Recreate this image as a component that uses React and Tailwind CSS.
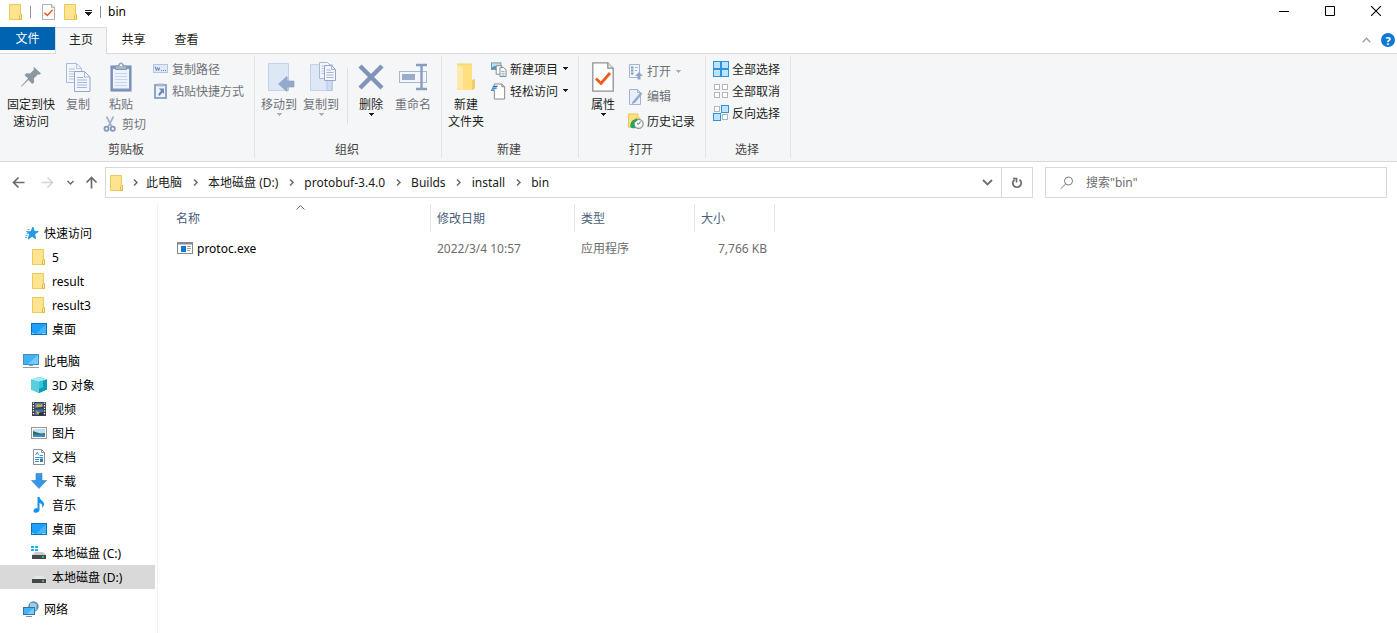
import React, { useState } from 'react';
import clsx from 'clsx';

// ---------- Icons ----------

const FolderIcon = () => (
  <svg width="16" height="16" viewBox="0 0 16 16">
    <path d="M1.5.5h11v10h1v5h-12z" fill="#ffe48f" stroke="#ecc75a" />
    <path d="M11.5 15.5v-4l1-1h1v5z" fill="#ffe9a6" stroke="#e3b93f" />
  </svg>
);

const CheckedPageIcon = ({ width = 13, height = 16 }) => (
  <svg width={width} height={height} viewBox="0 0 22 30" preserveAspectRatio="none">
    <path d="M.8.8h15l5.400 5.400v23H.8z" fill="#fff" stroke="#8d9095" strokeWidth="1.300" />
    <path d="M15.800.8v5.400h5.400" fill="#e8e9eb" stroke="#8d9095" strokeWidth="1.300" />
    <path d="M4 16.500l5 5L18 11" fill="none" stroke="#f2591b" strokeWidth="2.800" />
  </svg>
);

const ChevronIcon = ({ className }) => (
  <svg width="9" height="9" viewBox="0 0 9 9" className={className}>
    <path d="M3 1.500l3 3-3 3" fill="none" stroke="currentColor" strokeWidth="1.500" />
  </svg>
);

const Caret = ({ className }) => (
  <svg width="7" height="4" viewBox="0 0 7 4" className={className} shapeRendering="crispEdges">
    <path d="M0 0h6L3 3z" fill="currentColor" />
  </svg>
);

const PinIcon = () => (
  <svg width="22" height="22" viewBox="0 0 22 22">
    <path d="M14 1l7 6.500-1.800 1.200-1.200-.4-4.200 4.200.5 3.400-2 2-3.900-3.900L1.500 20.800 1 20.300 8 12.600 4.500 9l2-1.800 3.600.4 4-4.100-.7-1.200z" fill="#8b989f" />
  </svg>
);

const CopyIcon = () => (
  <svg width="25" height="29" viewBox="0 0 25 29">
    <path d="M.5.5h10l5 5v14h-15z" fill="#f3f6fc" stroke="#a9b9d8" />
    <path d="M10.500.5v5h5M3 6h6M3 8.500h10M3 11h10M3 13.500h10M3 16h10" fill="none" stroke="#b6c4df" />
    <path d="M8.500 8.500h10l5.500 5.500v14.500h-15.500z" fill="#f3f6fc" stroke="#93a7cd" />
    <path d="M18.500 8.500v5.500h5.500M11 14.500h6M11 17h10M11 19.500h10M11 22h10M11 24.500h10" fill="none" stroke="#a4b5d6" />
  </svg>
);

const PasteIcon = () => (
  <svg width="22" height="30" viewBox="0 0 22 30">
    <rect x="1" y="4" width="20" height="25" fill="#8298c2" stroke="#7086b2" />
    <path d="M3 7h16v19.500H3z" fill="#edf3fc" />
    <path d="M5 11.500h12M5 14.500h12M5 17.500h12M5 20.500h12M5 23.500h12" stroke="#c7d5ec" />
    <path d="M5.500 7.500V4h3c0-4 5-4 5 0h3v3.500z" fill="#aab7cb" stroke="#8797b3" />
    <circle cx="11" cy="3.200" r="1" fill="#fff" />
  </svg>
);

const ScissorsIcon = () => (
  <svg width="16" height="16" viewBox="0 0 16 16" fill="none">
    <path d="M3.500.5l5.200 10M10.500.5L5.300 10.500" stroke="#a2b2c9" strokeWidth="1.700" />
    <circle cx="3.500" cy="12.700" r="2.100" stroke="#7f97bd" strokeWidth="1.700" />
    <circle cx="9.800" cy="12.700" r="2.100" stroke="#7f97bd" strokeWidth="1.700" />
  </svg>
);

const PathIcon = () => (
  <svg width="16" height="16" viewBox="0 0 16 16">
    <rect x=".5" y="3.500" width="14" height="8" fill="#dfe9f8" stroke="#b4c5e0" />
    <path d="M2 5.500l1.500 4 1-3 1.200 3 .8-3M8 9.500h1M10 9.500h1M12 9.500h1" fill="none" stroke="#6d82ab" />
  </svg>
);

const PasteShortcutIcon = () => (
  <svg width="16" height="16" viewBox="0 0 16 16">
    <rect x="2" y="2" width="11" height="13" fill="#edf3fc" stroke="#8196bf" strokeWidth="1.700" />
    <path d="M4.500 3.500v-3h6v3z" fill="#aab7cb" />
    <path d="M5.500 5.500h5.500v5.500L9.500 9.500 6.500 13 5 11.500 8 7.500z" fill="#7188b5" />
  </svg>
);

const MoveToIcon = () => (
  <svg width="28" height="30" viewBox="0 0 28 30" className="ml-1">
    <path d="M1.500 1.500h20v27h-20z" fill="#dde7f6" stroke="#c4d2e9" />
    <path d="M18 16h3.500v12.500H18z" fill="#d0dcf0" stroke="#b9c8e2" />
    <path d="M11.500 22l8.500-7.500v4.500h7v6h-7v4.500z" fill="#95a9ca" stroke="#879cc1" strokeWidth=".6" />
  </svg>
);

const CopyToIcon = () => (
  <svg width="28" height="30" viewBox="0 0 28 30" className="ml-1">
    <path d="M1.500 2.500h22v26h-22z" fill="#dde7f6" stroke="#c4d2e9" />
    <path d="M18 18h5v10.500h-5z" fill="#cfdbef" stroke="#b5c5e1" />
    <path d="M10.500.5h8l3 3v13h-11z" fill="#f3f6fc" stroke="#a9b9d8" />
    <path d="M12.500 4h6M12.500 6.500h7M12.500 9h7M12.500 11.500h7" stroke="#b6c4df" />
    <path d="M15.500 3.500h7l4 4v11h-11z" fill="#f3f6fc" stroke="#93a7cd" />
    <path d="M22.500 3.500v4h4M17.500 8h4M17.500 10.500h7M17.500 13h7M17.500 15.500h7" fill="none" stroke="#a4b5d6" />
  </svg>
);

const DeleteIcon = () => (
  <svg width="26" height="26" viewBox="0 0 26 26">
    <path d="M2 2l22 22M24 2L2 24" stroke="#8094b7" strokeWidth="4.500" />
  </svg>
);

const RenameIcon = () => (
  <svg width="28" height="28" viewBox="0 0 28 28">
    <rect x=".5" y="8.500" width="27" height="11" fill="#f3f6fc" stroke="#a6b7d4" />
    <rect x="3" y="11" width="13" height="6" fill="#9bacca" />
    <path d="M17 2h4.500l1 1 1-1H28M17 26h4.500l1-1 1 1H28M22.500 3v22" fill="none" stroke="#899dbf" strokeWidth="2.400" />
  </svg>
);

const NewFolderIcon = () => (
  <svg width="20" height="28" viewBox="0 0 20 28">
    <path d="M1 1h15v16h2v10H1z" fill="#ffdf80" />
    <path d="M1 1l6 4v22.500L1 25z" fill="#ffeaa8" />
    <path d="M16 17l3-1v9.500l-3 1.500z" fill="#f2cd67" />
    <path d="M1 1h15" stroke="#f2d278" />
  </svg>
);

const NewItemIcon = () => (
  <svg width="17" height="17" viewBox="0 0 17 17">
    <rect x=".5" y="1.500" width="10" height="7" fill="#b9e2f2" stroke="#7f9099" />
    <path d="M1 6.500l3-2 3 2 3-1.500V8H1z" fill="#4b9ac0" />
    <path d="M5.500 4.500h6v9h-6z" fill="#fff" stroke="#7d858b" />
    <path d="M9.500 6.500h4l2.500 2.500v7H9.500z" fill="#fff" stroke="#7d858b" />
    <path d="M11 10.500h3.500M11 12.500h3.500M11 14.500h3.500" stroke="#6aaed6" />
  </svg>
);

const EasyAccessIcon = () => (
  <svg width="17" height="17" viewBox="0 0 17 17">
    <path d="M3.500.5h8l3 3v13h-11z" fill="#fff" stroke="#7d858b" />
    <path d="M11.500.5v3h3" fill="none" stroke="#7d858b" />
    <path d="M0 2h6v6H0z" fill="#f5f6f7" />
    <path d="M2 3h5M1 5h5M0 7h4" stroke="#1f6fb5" strokeWidth="1.300" />
  </svg>
);

const OpenIcon = () => (
  <svg width="16" height="16" viewBox="0 0 16 16">
    <path d="M1.500.5h10v13h-10z" fill="#f1f5fc" stroke="#a4b4d0" />
    <path d="M3 3.500h2.500M3 6.500h2.500M3 9.500h2.500" stroke="#7f98c4" strokeWidth="1.800" />
    <path d="M7 3.500h3M7 6.500h2" stroke="#a4b4d0" />
    <path d="M11 8l4 4h-2.500v3.500h-3V12H7z" fill="#8fa4c8" />
  </svg>
);

const EditIcon = () => (
  <svg width="16" height="16" viewBox="0 0 16 16">
    <path d="M1.500.5h8l3 3v12h-11z" fill="#e9f0fb" stroke="#a4b4d0" />
    <path d="M9.500.5v3h3" fill="none" stroke="#a4b4d0" />
    <path d="M13.500 4L6 13" stroke="#95a9ca" strokeWidth="2.500" />
    <path d="M5 12l2 1.500-3 1.500z" fill="#7e93b8" />
  </svg>
);

const HistoryIcon = () => (
  <svg width="17" height="17" viewBox="0 0 17 17">
    <path d="M.5.5h10v4h2v10H.5z" fill="#ffe07a" stroke="#eac353" />
    <circle cx="11.300" cy="11" r="4.800" fill="#f3f5f6" stroke="#8d9497" strokeWidth="1.300" />
    <path d="M13.500 8.500L11 11.500l-1.500-1" fill="none" stroke="#4e5558" />
    <path d="M2.500 14c-.3-5 2-7.500 5.500-8l.5-1.500 2 2.500-3 2.500v-1.200C6 9.500 6 12 8 15.500c-2 .5-4.500.3-5.500-1.500z" fill="#27a45b" />
  </svg>
);

const BLUE_TILE = { fill: '#bfe3fb', stroke: '#2c93e0' };
const GREY_TILE = { fill: '#fff', stroke: '#b3b6b9' };

const TilesIcon = ({ tiles }) => (
  <svg width="16" height="16" viewBox="0 0 16 16">
    {tiles.map((tile, i) => {
      const size = tile === BLUE_TILE ? 7 : 5;
      const inset = tile === BLUE_TILE ? 0.5 : 1.5;
      return (
        <rect
          key={i}
          x={(i % 2) * 8 + inset}
          y={Math.floor(i / 2) * 8 + inset}
          width={size}
          height={size}
          {...tile}
        />
      );
    })}
  </svg>
);

const StarIcon = () => (
  <svg width="16" height="16" viewBox="0 0 16 16">
    <path d="M10 2l1.100 4.200 4.200.3-3.600 2.800.9 4.500-3.500-2.500-4 2.900 1.500-4.900L4 6.600l3.800.1z" fill="#1f9cee" stroke="#1180cf" strokeWidth=".7" />
    <path d="M4.500 4.500h2M3 6.500h2M3.500 8.500h2M2.500 10.500h2M2 12.500h2" stroke="#57b3ee" />
  </svg>
);

const DesktopIcon = () => (
  <svg width="16" height="16" viewBox="0 0 16 16">
    <rect x=".5" y="2.500" width="15" height="11" fill="#1ba1fb" stroke="#0c72b8" />
    <path d="M15 3v8L8 13H5z" fill="#43b4ff" />
    <path d="M1.500 12.500h1M11.500 12.500h1M13.500 12.500h1" stroke="#fff" />
  </svg>
);

const ComputerIcon = () => (
  <svg width="16" height="16" viewBox="0 0 16 16">
    <rect x=".5" y="1.500" width="15" height="10" fill="#3fb1f6" stroke="#4b8bb4" />
    <path d="M15 2v9H5z" fill="#74cbff" />
    <path d="M6 12h4v1H6z" fill="#8aa2b2" />
    <path d="M0 14.500h16" stroke="#8f9ea8" />
  </svg>
);

const CubeIcon = () => (
  <svg width="16" height="16" viewBox="0 0 16 16">
    <path d="M8 0l8 2.500v10L8 16l-8-3.500v-10z" fill="#20b3c9" />
    <path d="M8 0l8 2.500-8 2.500-8-2.500z" fill="#a4ecf2" />
    <path d="M0 2.500L8 5v11l-8-3.500z" fill="#59cfdc" />
    <path d="M8 5l8-2.500v10L8 16z" fill="#0e9db8" />
    <path d="M8 5l4-1.200v6.500L8 12z" fill="#35c4d8" />
  </svg>
);

const VideoIcon = () => (
  <svg width="16" height="16" viewBox="0 0 16 16">
    <path d="M1 1h14v14H1z" fill="#3b3d41" />
    <path d="M2.500 1.500v13M13.500 1.500v13" stroke="#fff" strokeWidth="1.300" strokeDasharray="1.300 1.300" />
    <path d="M4 2h8v5.500H4z" fill="#4c7fc4" />
    <path d="M4 8.500h8V14H4z" fill="#3d73bd" />
    <path d="M5 5l2-2 2 1 2-1v3H5zM5 10l3 1 2 2H6z" fill="#d9a92f" />
    <path d="M4 7l8-1v1.500H4zM8 12l4-1v3H8z" fill="#20303f" />
  </svg>
);

const PictureIcon = () => (
  <svg width="16" height="16" viewBox="0 0 16 16">
    <rect x=".5" y="2.500" width="15" height="11" fill="#fff" stroke="#95999c" />
    <path d="M2 4h12v8H2z" fill="#bfe0f5" />
    <path d="M2 6l4 1.500 4 1 4-.5v2H2z" fill="#2f6b5c" />
    <path d="M2 9.500h12V12H2z" fill="#3f86c4" />
  </svg>
);

const DocumentIcon = () => (
  <svg width="16" height="16" viewBox="0 0 16 16">
    <path d="M2.500.5h8l3 3v12h-11z" fill="#fff" stroke="#8b8f92" />
    <path d="M10.500.5v3h3" fill="none" stroke="#8b8f92" />
    <path d="M4.500 6l2-3 1 3M8.500 6.500h3.500M4 8.500h8M4 10.500h4M4 12.500h4" fill="none" stroke="#3a94d0" />
    <path d="M9 9.500h3V13H9z" fill="#2f7fb5" />
  </svg>
);

const DownloadIcon = () => (
  <svg width="16" height="16" viewBox="0 0 16 16">
    <path d="M5 .5h6v7h4.500L8 15.500.5 7.500H5z" fill="#3b95e6" stroke="#2a7fcf" strokeWidth=".6" />
  </svg>
);

const MusicIcon = () => (
  <svg width="16" height="16" viewBox="0 0 16 16">
    <path d="M6.500 0h2c.3 3 4.800 4 4.500 7.500-.2 1.500-1 2.500-2 3.500.8-3-.5-4.500-2.500-5v7c0 3-6 4-6 1 0-2.300 2.500-3.200 4-2.500z" fill="#1593ec" />
  </svg>
);

const DriveIcon = ({ system }) => (
  <svg width="16" height="16" viewBox="0 0 16 16">
    {system && <path d="M0 1h3v2H0zM4 1h3v2H4zM0 4h3v2H0zM4 4h3v2H4z" fill="#12b3f0" />}
    <path d="M4 7h8l3 3H1z" fill={system ? '#c9cbcd' : '#e4e5e6'} />
    <path d="M1 10h14v4H1z" fill="#45494c" />
    <path d="M11 12h2" stroke="#35e05a" strokeWidth="1.400" />
  </svg>
);

const NetworkIcon = () => (
  <svg width="16" height="16" viewBox="0 0 16 16">
    <circle cx="10.500" cy="5.500" r="5.200" fill="#5d93b8" />
    <path d="M7 2c2 1 4-1 6 1s-1 3 1 6c-3 1-5-1-7-3z" fill="#a5cbe0" />
    <rect x=".5" y="6.500" width="11" height="7" fill="#45b2f5" stroke="#33749f" />
    <path d="M11 7v6H4z" fill="#7accff" />
    <path d="M3 15.500h6" stroke="#7f929e" />
  </svg>
);

const ExeIcon = () => (
  <svg width="16" height="16" viewBox="0 0 16 16">
    <rect x=".5" y="2.500" width="15" height="11" fill="#fff" stroke="#858a8e" />
    <path d="M0 2h16v2.500H0z" fill="#858a8e" />
    <path d="M4 6h5v6H4z" fill="#0a78d7" />
    <path d="M10 6.500h4M10 8.500h4M10 10.500h3" stroke="#9ea2a5" />
  </svg>
);

const ArrowIcon = ({ className }) => (
  <svg width="13" height="13" viewBox="0 0 13 13" className={className}>
    <path d="M12.500 6.500H1.500M6.500 1.500l-5 5 5 5" fill="none" stroke="currentColor" strokeWidth="1.700" />
  </svg>
);

// ---------- Ribbon ----------

const LargeButton = ({ icon, lines, width = 'w-[42px]', disabled, menu }) => (
  <button
    type="button"
    className={clsx('flex flex-col items-center pt-1', width, disabled ? 'text-[#6f7378]' : 'text-[#1e1e1e]')}
  >
    <span className="flex h-[30px] items-center justify-center">{icon}</span>
    <span className="mt-1 whitespace-nowrap">
      {lines.map((line) => (
        <span key={line} className="block">{line}</span>
      ))}
    </span>
    {menu && <Caret className={disabled ? 'text-[#adb0b3]' : 'text-[#1e1e1e]'} />}
  </button>
);

const SmallButton = ({ icon, label, height = 'h-[22px]', disabled, menu }) => (
  <button
    type="button"
    className={clsx('flex items-center gap-[3px] whitespace-nowrap', height, disabled ? 'text-[#6f7378]' : 'text-[#1e1e1e]')}
  >
    <span className="flex w-4 shrink-0 justify-center">{icon}</span>
    {label}
    {menu && <Caret className={clsx('ml-px', disabled && 'text-[#adb0b3]')} />}
  </button>
);

const RibbonGroup = ({ label, width, children }) => (
  <section
    aria-label={label}
    className={clsx('flex shrink-0 flex-col justify-between border-r border-[#e1e3e5]', width)}
  >
    <div className="flex pt-0.5">{children}</div>
    <div className="pr-0.5 text-center text-[#444]">{label}</div>
  </section>
);

const Ribbon = () => (
  <div className="flex h-[108px] overflow-hidden border-b border-[#d9dadb] bg-[#f5f6f7] pt-0.5 pb-[3px]">
    <RibbonGroup label="剪贴板" width="w-[255px]">
      <LargeButton icon={<PinIcon />} lines={['固定到快', '速访问']} width="w-[62px]" />
      <LargeButton icon={<CopyIcon />} lines={['复制']} width="w-8" disabled />
      <div className="ml-[9px] flex flex-col items-start">
        <LargeButton icon={<PasteIcon />} lines={['粘贴']} width="w-9" disabled />
        <SmallButton icon={<ScissorsIcon />} label="剪切" disabled />
      </div>
      <div className="ml-[7px] flex flex-col items-start">
        <SmallButton icon={<PathIcon />} label="复制路径" disabled />
        <SmallButton icon={<PasteShortcutIcon />} label="粘贴快捷方式" disabled />
      </div>
    </RibbonGroup>

    <RibbonGroup label="组织" width="w-[187px]">
      <div className="flex pl-[3px]">
        <LargeButton icon={<MoveToIcon />} lines={['移动到']} disabled menu />
        <LargeButton icon={<CopyToIcon />} lines={['复制到']} disabled menu />
        <div className="mt-2.5 mr-0.5 ml-[5px] h-14 w-px bg-[#dfe1e3]" />
        <LargeButton icon={<DeleteIcon />} lines={['删除']} menu />
        <LargeButton icon={<RenameIcon />} lines={['重命名']} disabled />
      </div>
    </RibbonGroup>

    <RibbonGroup label="新建" width="w-[137px]">
      <LargeButton icon={<NewFolderIcon />} lines={['新建', '文件夹']} width="w-12" />
      <div className="flex flex-col items-start pl-px">
        <SmallButton icon={<NewItemIcon />} label="新建项目" menu />
        <SmallButton icon={<EasyAccessIcon />} label="轻松访问" menu />
      </div>
    </RibbonGroup>

    <RibbonGroup label="打开" width="w-[127px]">
      <LargeButton icon={<CheckedPageIcon width={22} height={30} />} lines={['属性']} width="w-12" menu />
      <div className="flex flex-col items-start pt-px pl-px">
        <SmallButton icon={<OpenIcon />} label="打开" height="h-[25px]" disabled menu />
        <SmallButton icon={<EditIcon />} label="编辑" height="h-[25px]" disabled />
        <SmallButton icon={<HistoryIcon />} label="历史记录" height="h-[25px]" />
      </div>
    </RibbonGroup>

    <RibbonGroup label="选择" width="w-[85px]">
      <div className="flex flex-col items-start pl-[7px]">
        <SmallButton
          icon={<TilesIcon tiles={[BLUE_TILE, BLUE_TILE, BLUE_TILE, BLUE_TILE]} />}
          label="全部选择"
        />
        <SmallButton
          icon={<TilesIcon tiles={[GREY_TILE, GREY_TILE, GREY_TILE, GREY_TILE]} />}
          label="全部取消"
        />
        <SmallButton
          icon={<TilesIcon tiles={[GREY_TILE, BLUE_TILE, BLUE_TILE, GREY_TILE]} />}
          label="反向选择"
        />
      </div>
    </RibbonGroup>
  </div>
);

// ---------- Title bar and tabs ----------

const TitleBar = () => (
  <header className="flex h-[27px] items-stretch justify-between">
    <div className="flex items-center pb-1 pl-2">
      <FolderIcon />
      <span className="ml-1.5 h-3 w-px bg-[#8f8f8f]" />
      <button type="button" aria-label="属性" className="ml-[11px]">
        <CheckedPageIcon />
      </button>
      <button type="button" aria-label="新建文件夹" className="ml-2">
        <FolderIcon />
      </button>
      <button type="button" aria-label="自定义快速访问工具栏" className="ml-1.5 pt-0.5">
        <svg width="7" height="6" viewBox="0 0 7 6" shapeRendering="crispEdges">
          <path d="M0 0h7v1H0zM0 2h7L3.500 6z" fill="#1e1e1e" />
        </svg>
      </button>
      <span className="ml-2 h-3 w-px bg-[#8f8f8f]" />
      <h1 className="ml-[7px]">bin</h1>
    </div>
    <div className="flex gap-1 pb-[5px]">
      <button type="button" aria-label="最小化" className="flex w-[42px] items-center justify-center">
        <svg width="10" height="10" viewBox="0 0 10 10"><path d="M0 5.500h10" stroke="#000" /></svg>
      </button>
      <button type="button" aria-label="最大化" className="flex w-[42px] items-center justify-center">
        <svg width="10" height="10" viewBox="0 0 10 10"><path d="M.5.5h9v9h-9z" fill="none" stroke="#000" /></svg>
      </button>
      <button type="button" aria-label="关闭" className="flex w-[42px] items-center justify-center">
        <svg width="10" height="10" viewBox="0 0 10 10"><path d="M0 0l10 10M10 0L0 10" stroke="#000" strokeWidth="1.100" /></svg>
      </button>
    </div>
  </header>
);

const TabBar = () => (
  <div className="flex h-[27px] justify-between border-b border-[#dadbdc]">
    <div className="flex items-start">
      <button type="button" className="h-[23px] w-[55px] bg-[#0063b1] text-white">文件</button>
      <button type="button" className="-mb-px h-[27px] w-[52px] border-x border-t border-[#dadbdc] bg-[#f5f6f7] pb-1 text-[#1e1e1e]">
        主页
      </button>
      <button type="button" className="h-[26px] w-[53px] pb-0.5 text-[#1e1e1e]">共享</button>
      <button type="button" className="h-[26px] w-[53px] pb-0.5 text-[#1e1e1e]">查看</button>
    </div>
    <div className="flex items-center gap-2.5 pr-0.5">
      <button type="button" aria-label="最小化功能区">
        <svg width="9" height="6" viewBox="0 0 9 6"><path d="M.7 5.200l3.800-4 3.800 4" fill="none" stroke="#a0a3a6" strokeWidth="1.400" /></svg>
      </button>
      <button type="button" aria-label="帮助" className="flex h-3.5 w-3.5 items-center justify-center rounded-full bg-[#0f78d4] text-[11px] font-bold text-white">
        ?
      </button>
    </div>
  </div>
);

// ---------- Address bar ----------

const CRUMBS = ['此电脑', '本地磁盘 (D:)', 'protobuf-3.4.0', 'Builds', 'install', 'bin'];

const NavigationBar = () => {
  const [query, setQuery] = useState('');

  return (
    <div className="flex items-center pt-[5px] pr-2.5 pb-1.5">
      <div className="flex w-[105px] shrink-0 items-center pl-3">
        <button type="button" aria-label="后退"><ArrowIcon className="text-[#6b6b6b]" /></button>
        <button type="button" aria-label="前进" className="ml-4"><ArrowIcon className="rotate-180 text-[#d6d6d6]" /></button>
        <button type="button" aria-label="最近浏览的位置" className="ml-3"><ChevronIcon className="rotate-90 text-[#6b6b6b]" /></button>
        <button type="button" aria-label="上移" className="ml-2.5"><ArrowIcon className="rotate-90 text-[#6b6b6b]" /></button>
      </div>

      <div className="flex h-[31px] min-w-0 flex-1 items-stretch border border-[#d9d9d9]">
        <nav aria-label="地址" className="flex min-w-0 flex-1 items-center overflow-hidden pl-[3px] whitespace-nowrap">
          <FolderIcon />
          {CRUMBS.map((crumb, i) => (
            <React.Fragment key={crumb}>
              <span className={clsx('flex shrink-0 justify-center', i === 0 ? 'w-[21px]' : 'w-[26px]')}>
                <ChevronIcon className="text-[#6b6b6b]" />
              </span>
              <a href="#" className="text-[#1a1a1a]">{crumb}</a>
            </React.Fragment>
          ))}
        </nav>
        <button type="button" aria-label="以前的位置" className="flex w-7 items-center justify-center">
          <svg width="11" height="7" viewBox="0 0 11 7"><path d="M1 1l4.500 4.500L10 1" fill="none" stroke="#707070" strokeWidth="1.900" /></svg>
        </button>
        <button type="button" aria-label="刷新" className="flex w-[31px] items-center justify-center border-l border-[#d9d9d9]">
          <svg width="12" height="12" viewBox="0 0 12 12" fill="none" stroke="#6b6b6b" strokeWidth="1.700">
            <path d="M8.500 2.700a4.200 4.200 0 1 1-5 0" />
            <path d="M2 1.500h3.500v4" />
          </svg>
        </button>
      </div>

      <label className="ml-3 flex h-[31px] w-[342px] shrink items-center border border-[#d9d9d9] pl-3.5">
        <svg width="14" height="14" viewBox="0 0 14 14" fill="none" stroke="#7c7c7c">
          <circle cx="8.500" cy="5" r="4" />
          <path d="M5.600 8L.7 12.800" />
        </svg>
        <input
          type="text"
          aria-label="搜索"
          value={query}
          onChange={(e) => setQuery(e.target.value)}
          placeholder={'搜索"bin"'}
          className="ml-3 min-w-0 flex-1 outline-none placeholder:text-[#6d6d6d]"
        />
      </label>
    </div>
  );
};

// ---------- Sidebar ----------

const TREE = [
  {
    name: '快速访问',
    icon: <StarIcon />,
    items: [
      { name: '5', icon: <FolderIcon /> },
      { name: 'result', icon: <FolderIcon /> },
      { name: 'result3', icon: <FolderIcon /> },
      { name: '桌面', icon: <DesktopIcon /> },
    ],
  },
  {
    name: '此电脑',
    icon: <ComputerIcon />,
    items: [
      { name: '3D 对象', icon: <CubeIcon /> },
      { name: '视频', icon: <VideoIcon /> },
      { name: '图片', icon: <PictureIcon /> },
      { name: '文档', icon: <DocumentIcon /> },
      { name: '下载', icon: <DownloadIcon /> },
      { name: '音乐', icon: <MusicIcon /> },
      { name: '桌面', icon: <DesktopIcon /> },
      { name: '本地磁盘 (C:)', icon: <DriveIcon system /> },
      { name: '本地磁盘 (D:)', icon: <DriveIcon /> },
    ],
  },
  { name: '网络', icon: <NetworkIcon />, items: [] },
];

const Sidebar = () => {
  const [selected, setSelected] = useState('本地磁盘 (D:)');

  return (
    <nav aria-label="导航窗格" className="w-[158px] shrink-0 border-r border-[#f2f2f2] pt-[17px] pr-0.5">
      {TREE.map((root) => (
        <div key={root.name} className="mb-2">
          <a href="#" className="flex h-6 items-center gap-[5px] pl-[23px]">
            {root.icon}
            {root.name}
          </a>
          {root.items.map((item) => (
            <a
              key={item.name}
              href="#"
              onClick={() => setSelected(item.name)}
              className={clsx('flex h-6 items-center gap-[5px] pl-[31px]', selected === item.name && 'bg-[#d9d9d9]')}
            >
              {item.icon}
              {item.name}
            </a>
          ))}
        </div>
      ))}
    </nav>
  );
};

// ---------- File list ----------

const FILES = [{ name: 'protoc.exe', modified: '2022/3/4 10:57', type: '应用程序', size: '7,766 KB' }];

const FileList = () => (
  <main className="min-w-0 flex-1">
    <table className="w-[617px] table-fixed border-separate border-spacing-0">
      <colgroup>
        <col className="w-[273px]" />
        <col className="w-36" />
        <col className="w-[120px]" />
        <col className="w-20" />
      </colgroup>
      <thead>
        <tr className="h-7 text-left text-[#4c607a]">
          <th className="border-r border-[#e5e5e5] p-0 font-normal">
            <div className="relative ml-3 flex h-7 items-center pl-1.5">
              名称
              <svg width="9" height="5" viewBox="0 0 9 5" className="absolute inset-x-0 top-px mx-auto">
                <path d="M.5 4.500l4-4 4 4" fill="none" stroke="#6b6b6b" />
              </svg>
            </div>
          </th>
          <th className="border-r border-[#e5e5e5] p-0 pl-1.5 font-normal">修改日期</th>
          <th className="border-r border-[#e5e5e5] p-0 pl-1.5 font-normal">类型</th>
          <th className="border-r border-[#e5e5e5] p-0 pl-1.5 font-normal">大小</th>
        </tr>
      </thead>
      <tbody>
        {FILES.map((file) => (
          <tr key={file.name} className="h-8 text-[#6d6d6d]">
            <td className="p-0 pl-[19px] text-black">
              <span className="flex items-center gap-1">
                <ExeIcon />
                {file.name}
              </span>
            </td>
            <td className="p-0 pl-1.5">{file.modified}</td>
            <td className="p-0 pl-1.5">{file.type}</td>
            <td className="p-0 pr-2 text-right">{file.size}</td>
          </tr>
        ))}
      </tbody>
    </table>
  </main>
);

const App = () => (
  <div className="flex min-h-screen flex-col bg-white font-['Noto_Sans','Noto_Sans_CJK_SC',sans-serif] text-[12px] leading-[17px] text-black">
    <TitleBar />
    <TabBar />
    <Ribbon />
    <NavigationBar />
    <div className="flex flex-1">
      <Sidebar />
      <FileList />
    </div>
  </div>
);

export default App;
